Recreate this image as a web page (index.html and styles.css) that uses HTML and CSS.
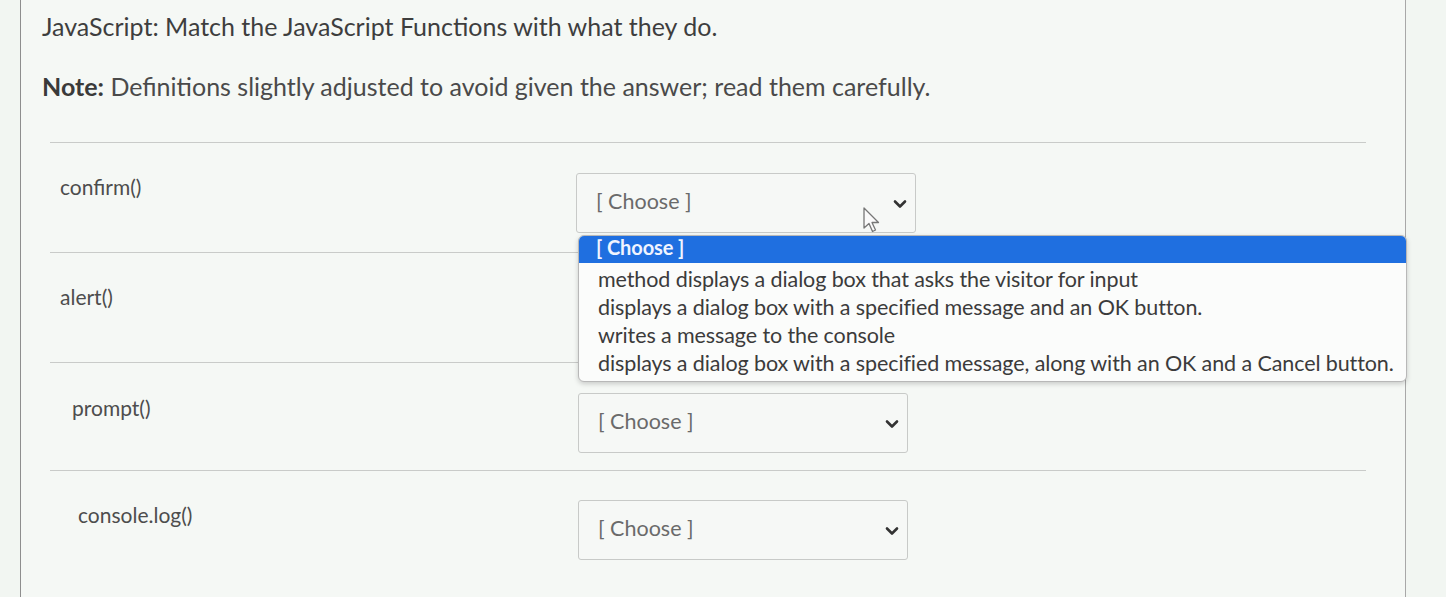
FILE: index.html
```html
<!DOCTYPE html>
<html>
<head>
<meta charset="utf-8">
<link rel="stylesheet" href="styles.css">
</head>
<body>
<div class="page">
  <h1 class="title">JavaScript: Match the JavaScript Functions with what they do.</h1>
  <p class="note"><strong>Note:</strong> Definitions slightly adjusted to avoid given the answer; read them carefully.</p>
  <div class="rows">
    <div class="row">
      <div class="label">confirm()</div>
      <div class="select open">
        <span class="placeholder">[ Choose ]</span>
        <svg class="chev" width="14" height="10" viewBox="0 0 14 10"><path d="M2 2.5 L7 7.5 L12 2.5" fill="none" stroke="#333" stroke-width="2.6" stroke-linecap="round" stroke-linejoin="round"/></svg>
      </div>
    </div>
    <div class="row">
      <div class="label">alert()</div>
    </div>
    <div class="row r3">
      <div class="label l3">prompt()</div>
      <div class="select s3">
        <span class="placeholder">[ Choose ]</span>
        <svg class="chev" width="14" height="10" viewBox="0 0 14 10"><path d="M2 2.5 L7 7.5 L12 2.5" fill="none" stroke="#333" stroke-width="2.6" stroke-linecap="round" stroke-linejoin="round"/></svg>
      </div>
    </div>
    <div class="row last">
      <div class="label l4">console.log()</div>
      <div class="select s3 s4">
        <span class="placeholder">[ Choose ]</span>
        <svg class="chev" width="14" height="10" viewBox="0 0 14 10"><path d="M2 2.5 L7 7.5 L12 2.5" fill="none" stroke="#333" stroke-width="2.6" stroke-linecap="round" stroke-linejoin="round"/></svg>
      </div>
    </div>
  </div>
</div>
<ul class="listbox">
  <li class="opt selected">[ Choose ]</li>
  <li class="opt">method displays a dialog box that asks the visitor for input</li>
  <li class="opt">displays a dialog box with a specified message and an OK button.</li>
  <li class="opt">writes a message to the console</li>
  <li class="opt">displays a dialog box with a specified message, along with an OK and a Cancel button.</li>
</ul>
<svg class="cursor" width="22" height="30" viewBox="0 0 22 30"><path d="M2 2 L2 22 L7 17.5 L10.5 25.5 L13.5 24 L10 16.5 L16.5 16.5 Z" fill="#fafafa" stroke="#777" stroke-width="1.3" stroke-linejoin="round"/></svg>
</body>
</html>
```
FILE: styles.css
```css
html, body {
  margin: 0;
  padding: 0;
}
body {
  background: #f2f6f2;
  font-family: Lato, "Open Sans", sans-serif;
  color: #4a4a4a;
  width: 1446px;
  height: 597px;
  overflow: hidden;
  position: relative;
}
.page {
  margin-left: 20px;
  width: 1386px;
  height: 597px;
  border-left: 1px solid #8e8e8e;
  border-right: 1px solid #a8a8a8;
  background: #f5f8f5;
  box-sizing: border-box;
  padding-left: 21px;
}
.title {
  margin: 0;
  padding-top: 11px;
  font-size: 25px;
  line-height: 30px;
  font-weight: 400;
  color: #3e3e3e;
}
.note {
  margin: 0;
  padding-top: 30px;
  font-size: 25px;
  line-height: 30px;
  color: #4a4a4a;
}
.note strong {
  font-weight: 700;
  color: #3a3a3a;
}
.rows {
  margin-top: 41px;
  margin-left: 8px;
  width: 1316px;
}
.row {
  border-top: 1px solid #c9cbc9;
  height: 109px;
  display: flex;
  align-items: flex-start;
}
.r3 {
  height: 107px;
}
.label {
  width: 526px;
  padding-left: 10px;
  padding-top: 32px;
  font-size: 21px;
  line-height: 24px;
  color: #4d4d4d;
  box-sizing: border-box;
}
.l3 { padding-left: 22px; padding-top: 33px; }
.l4 { padding-left: 28px; padding-top: 32px; }
.select {
  margin-top: 30px;
  width: 340px;
  height: 60px;
  border: 1px solid #c8cac8;
  border-radius: 3px;
  background: #f6f8f6;
  box-sizing: border-box;
  display: flex;
  align-items: center;
  justify-content: space-between;
  padding: 0 8px 0 19px;
}
.s3 {
  width: 330px;
  margin-left: 2px;
}
.s4 {
  margin-top: 29px;
}
.placeholder {
  font-size: 21.5px;
  color: #6a6a6a;
  padding-bottom: 4px;
}
.chev {
  display: block;
  margin-top: 2px;
}
.listbox {
  position: absolute;
  left: 578px;
  top: 235px;
  width: 829px;
  margin: 0;
  padding: 0 0 4px 0;
  list-style: none;
  background: #fbfcfb;
  border: 1px solid #b8b8b8;
  border-radius: 6px;
  box-shadow: 0 2px 5px rgba(0,0,0,0.18);
  box-sizing: border-box;
  overflow: hidden;
}
.opt {
  font-size: 21.5px;
  line-height: 28px;
  height: 28px;
  padding-left: 19px;
  color: #3b3b3b;
  white-space: nowrap;
  letter-spacing: -0.1px;
}
.opt.selected {
  background: #1f6fe0;
  color: #f0f4ff;
  font-weight: 700;
  font-size: 20px;
  height: 27px;
  line-height: 22px;
  margin-bottom: 2px;
  padding-left: 17px;
}
.cursor {
  position: absolute;
  left: 862px;
  top: 206px;
}
```
